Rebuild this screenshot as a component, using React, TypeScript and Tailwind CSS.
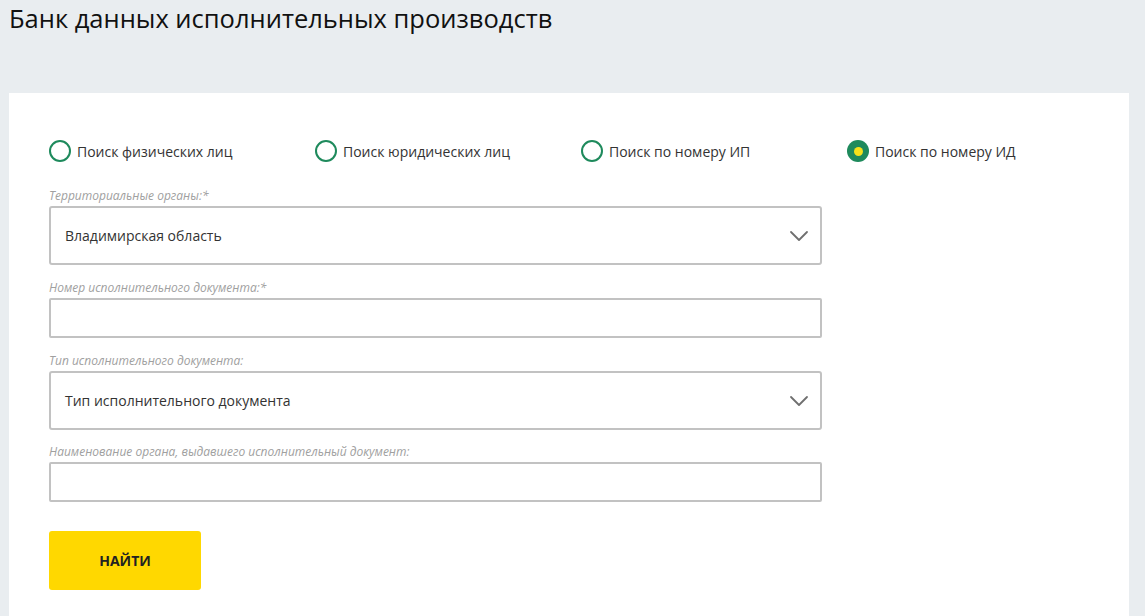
import React, { useState } from 'react';

const SEARCH_MODES = [
  { id: 'fiz', label: 'Поиск физических лиц' },
  { id: 'jur', label: 'Поиск юридических лиц' },
  { id: 'ip', label: 'Поиск по номеру ИП' },
  { id: 'id', label: 'Поиск по номеру ИД' },
];

const Chevron = () => (
  <svg width="20" height="12" viewBox="0 0 20 12" fill="none" className="shrink-0">
    <path d="M2 2l8 8 8-8" stroke="#6f6f6f" strokeWidth="1.8" strokeLinecap="round" strokeLinejoin="round" />
  </svg>
);

const FieldLabel: React.FC<{ text: string }> = ({ text }) => (
  <div className="text-[12px] italic leading-[16px] text-[#a0a0a0] mb-[2px]">{text}</div>
);

const SelectBox: React.FC<{ value: string }> = ({ value }) => (
  <div className="h-[59px] w-[773px] border-2 border-[#c2c2c2] rounded-[3px] flex items-center justify-between pl-[14px] pr-[11px] text-[14px] text-[#333]">
    <span>{value}</span>
    <Chevron />
  </div>
);

const TextBox = () => (
  <div className="h-[40px] w-[773px] border-2 border-[#c2c2c2] rounded-[2px]" />
);

export default function App() {
  const [mode, setMode] = useState('id');

  return (
    <div className="min-h-[616px] bg-[#e9edf0] font-['Open_Sans',sans-serif] overflow-hidden">
      <h1 className="pl-[9px] h-[93px] text-[25.5px] leading-[36px] text-[#111]">
        Банк данных исполнительных производств
      </h1>
      <div className="ml-[9px] w-[1120px] min-h-[523px] bg-white pl-[40px] pt-[47px]">
        <div className="flex h-[22px]">
          {SEARCH_MODES.map((m) => {
            const active = mode === m.id;
            return (
              <button
                key={m.id}
                onClick={() => setMode(m.id)}
                className="w-[266px] flex items-center gap-[6px] text-[14px] text-[#333] text-left"
              >
                {active ? (
                  <span className="h-[22px] w-[22px] rounded-full bg-[#1e8a5c] flex items-center justify-center">
                    <span className="h-[9px] w-[9px] rounded-full bg-[#f5e11a]" />
                  </span>
                ) : (
                  <span className="h-[22px] w-[22px] rounded-full border-2 border-[#1e8a5c]" />
                )}
                <span>{m.label}</span>
              </button>
            );
          })}
        </div>

        <div className="mt-[26px]">
          <FieldLabel text="Территориальные органы:*" />
          <SelectBox value="Владимирская область" />
        </div>

        <div className="mt-[15px]">
          <FieldLabel text="Номер исполнительного документа:*" />
          <TextBox />
        </div>

        <div className="mt-[15px]">
          <FieldLabel text="Тип исполнительного документа:" />
          <SelectBox value="Тип исполнительного документа" />
        </div>

        <div className="mt-[14px]">
          <FieldLabel text="Наименование органа, выдавшего исполнительный документ:" />
          <TextBox />
        </div>

        <button className="mt-[29px] h-[59px] w-[152px] rounded-[3px] bg-[#ffd800] text-[14px] font-bold text-[#222]">
          НАЙТИ
        </button>
      </div>
    </div>
  );
}
